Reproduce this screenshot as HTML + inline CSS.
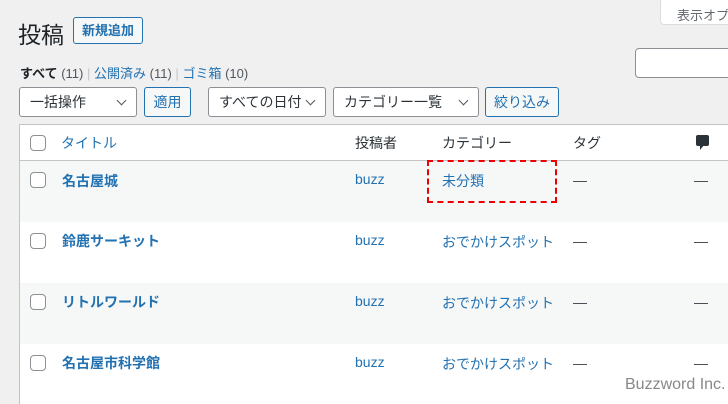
<!DOCTYPE html>
<html><head><meta charset="utf-8"><style>
*{box-sizing:border-box;margin:0;padding:0}
body{width:728px;height:400px;overflow:hidden;background:#f0f0f1;font-family:"Liberation Sans","Noto Sans CJK JP",sans-serif;color:#3c434a;font-size:14px;position:relative}
.a{position:absolute;white-space:nowrap}
.btn{position:absolute;border:1px solid #2271b1;color:#2271b1;background:#f6f7f7;border-radius:3px;text-align:center}
.sel{position:absolute;border:1px solid #8c8f94;background:#fff;border-radius:3px;height:30px;padding-left:10px;line-height:28px;font-size:14px;color:#2c3338}
.sel:after{content:"";position:absolute;right:11px;top:9px;width:6px;height:6px;border-right:1.5px solid #50575e;border-bottom:1.5px solid #50575e;transform:rotate(45deg)}
.cb{position:absolute;left:30px;width:16px;height:16px;border:1px solid #8c8f94;border-radius:4px;background:#fff}
.row{position:absolute;left:19px;width:720px;height:61px}
.t{position:absolute;left:62px;font-weight:bold;color:#2271b1;font-size:14px}
.link{color:#2271b1}
</style></head><body>
<div class="a" style="left:660px;top:-2px;width:80px;height:27px;background:#fff;border:1px solid #dcdcde;border-radius:4px;padding:6px 0 0 16px;font-size:13px;color:#646970">表示オプ</div>
<div class="a" style="left:18px;top:16px;font-size:23px;color:#1d2327">投稿</div>
<div class="btn" style="left:73px;top:17px;width:70px;height:27px;line-height:25px;font-size:13px;font-weight:bold">新規追加</div>
<div class="a" style="left:20px;top:63px;font-size:13px"><b style="color:#1d2327">すべて</b> <span style="color:#50575e">(11)</span> <span style="color:#c3c4c7">|</span> <span class="link">公開済み</span> <span style="color:#50575e">(11)</span> <span style="color:#c3c4c7">|</span> <span class="link">ゴミ箱</span> <span style="color:#50575e">(10)</span></div>
<div class="a" style="left:635px;top:48px;width:100px;height:30px;background:#fff;border:1px solid #8c8f94;border-radius:4px"></div>
<div class="sel" style="left:19px;top:87px;width:118px">一括操作</div>
<div class="btn" style="left:144px;top:87px;width:47px;height:30px;line-height:28px;font-size:14px">適用</div>
<div class="sel" style="left:208px;top:87px;width:118px">すべての日付</div>
<div class="sel" style="left:333px;top:87px;width:146px">カテゴリー一覧</div>
<div class="btn" style="left:485px;top:87px;width:74px;height:30px;line-height:28px;font-size:14px">絞り込み</div>
<div class="a" style="left:19px;top:124px;width:720px;height:37px;background:#fff;border:1px solid #c3c4c7"></div>
<div class="cb" style="top:135px"></div>
<div class="a link" style="left:61px;top:133px;font-size:14px">タイトル</div>
<div class="a" style="left:355px;top:133px;font-size:14px;color:#2c3338">投稿者</div>
<div class="a" style="left:442px;top:133px;font-size:14px;color:#2c3338">カテゴリー</div>
<div class="a" style="left:573px;top:133px;font-size:14px;color:#2c3338">タグ</div>
<div class="a" style="left:696px;top:135px;width:13px;height:11px;background:#2c3338;border-radius:2px"></div>
<div class="a" style="left:700px;top:145px;width:0;height:0;border-left:4px solid #2c3338;border-bottom:5px solid transparent"></div>
<div class="row" style="top:161px;background:#f6f7f7;border-left:1px solid #c3c4c7"></div>
<div class="row" style="top:222px;background:#fff;border-left:1px solid #c3c4c7"></div>
<div class="row" style="top:283px;background:#f6f7f7;border-left:1px solid #c3c4c7"></div>
<div class="row" style="top:344px;background:#fff;border-left:1px solid #c3c4c7;height:60px"></div>

<div class="cb" style="top:172px"></div><div class="a t" style="top:171px">名古屋城</div>
<div class="a link" style="left:355px;top:171px">buzz</div><div class="a link" style="left:442px;top:171px">未分類</div>
<div class="a" style="left:573px;top:172px">—</div><div class="a" style="left:694px;top:172px">—</div>
<div class="a" style="left:427px;top:160px;width:130px;height:43px;border:2px dashed #e00"></div>

<div class="cb" style="top:233px"></div><div class="a t" style="top:231px">鈴鹿サーキット</div>
<div class="a link" style="left:355px;top:232px">buzz</div><div class="a link" style="left:442px;top:232px">おでかけスポット</div>
<div class="a" style="left:573px;top:233px">—</div><div class="a" style="left:694px;top:233px">—</div>

<div class="cb" style="top:294px"></div><div class="a t" style="top:292px">リトルワールド</div>
<div class="a link" style="left:355px;top:293px">buzz</div><div class="a link" style="left:442px;top:293px">おでかけスポット</div>
<div class="a" style="left:573px;top:294px">—</div><div class="a" style="left:694px;top:294px">—</div>

<div class="cb" style="top:355px"></div><div class="a t" style="top:353px">名古屋市科学館</div>
<div class="a link" style="left:355px;top:354px">buzz</div><div class="a link" style="left:442px;top:354px">おでかけスポット</div>
<div class="a" style="left:573px;top:355px">—</div><div class="a" style="left:694px;top:355px">—</div>
<div class="a" style="left:625px;top:376px;font-size:16px;color:#888">Buzzword Inc.</div>
</body></html>
